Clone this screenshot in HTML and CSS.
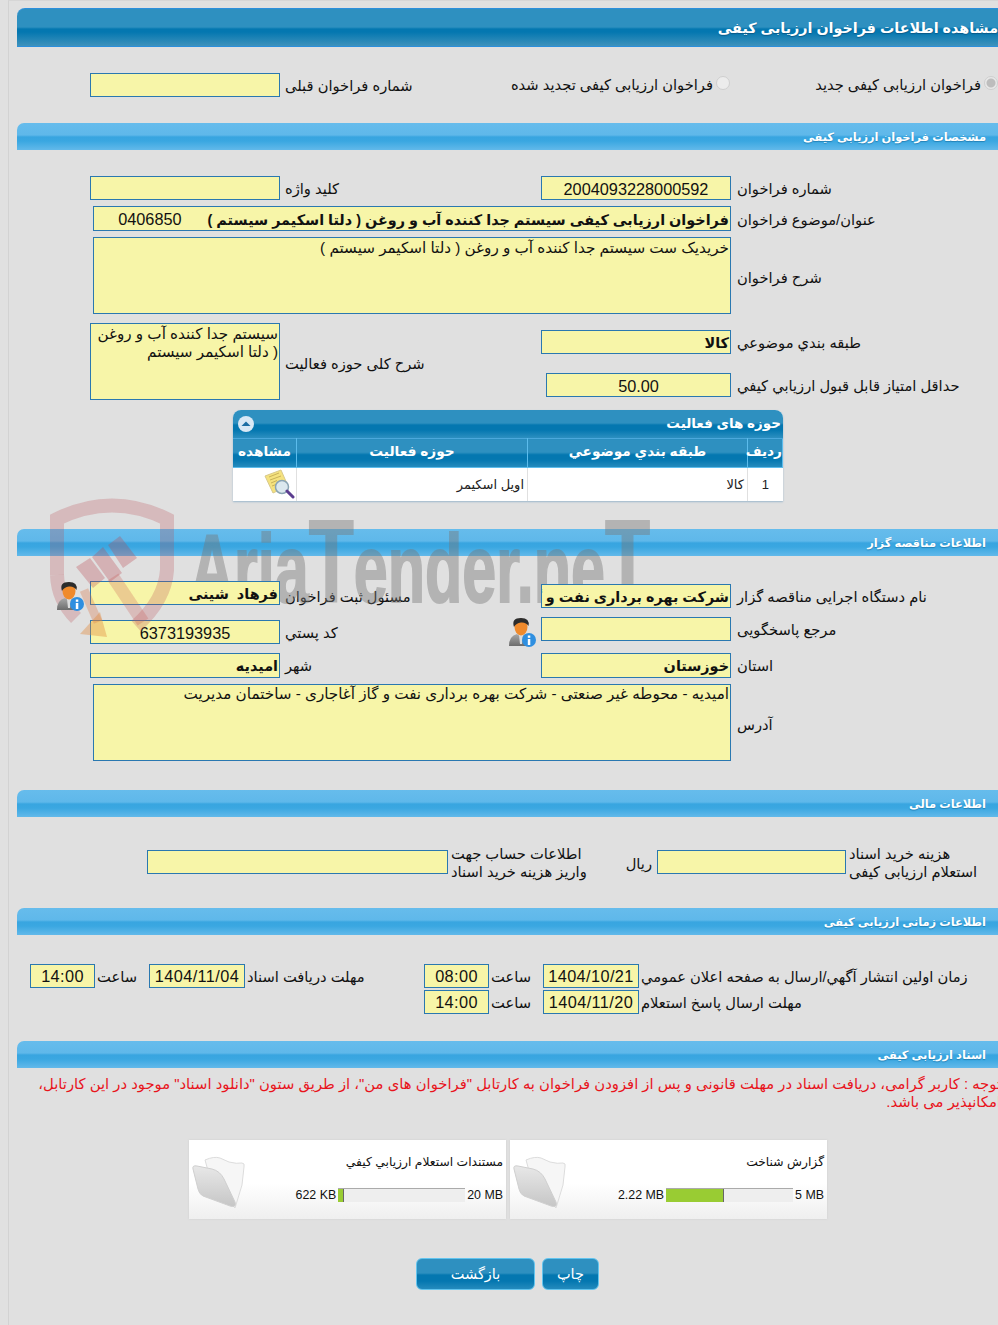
FILE: index.html
```html
<!DOCTYPE html>
<html lang="fa" dir="rtl">
<head>
<meta charset="utf-8">
<title>مشاهده اطلاعات فراخوان ارزیابی کیفی</title>
<link rel="stylesheet" href="styles.css">
</head>
<body>
<div class="page">
  <h1 class="bar bar-main">مشاهده اطلاعات فراخوان ارزیابی کیفی</h1>

  <div class="row radios">
    <div class="radio-cell rc1"><span class="radio checked"></span><span>فراخوان ارزیابی کیفی جدید</span></div>
    <div class="radio-cell rc2"><span class="radio"></span><span>فراخوان ارزیابی کیفی تجدید شده</span></div>
    <div class="lbl lbl-l prev-l">شماره فراخوان قبلی</div>
    <div class="field w190"></div>
  </div>

  <h2 class="bar bar-sub s2">مشخصات فراخوان ارزیابی کیفی</h2>

  <div class="row r1">
    <div class="lbl lbl-r">شماره فراخوان</div>
    <div class="field w190 center num">2004093228000592</div>
    <div class="lbl lbl-l">کلید واژه</div>
    <div class="field w190"></div>
  </div>
  <div class="row r2">
    <div class="lbl lbl-r">عنوان/موضوع فراخوان</div>
    <div class="field w638 bold">فراخوان ارزیابی کیفی سیستم جدا کننده آب و روغن ( دلتا اسکیمر سیستم )<span class="num plain">0406850</span></div>
  </div>
  <div class="row r3">
    <div class="lbl lbl-r">شرح فراخوان</div>
    <div class="field w638 area">خریدیک ست سیستم جدا کننده آب و روغن ( دلتا اسکیمر سیستم )</div>
  </div>
  <div class="row r4">
    <div class="stack">
      <div class="row r4a">
        <div class="lbl lbl-r">طبقه بندي موضوعي</div>
        <div class="field w190 bold">کالا</div>
      </div>
      <div class="row r4b">
        <div class="lbl lbl-r">حداقل امتياز قابل قبول ارزيابي كيفي</div>
        <div class="field w185 center num">50.00</div>
      </div>
    </div>
    <div class="lbl lbl-l">شرح کلی حوزه فعالیت</div>
    <div class="field w190 area">سیستم جدا کننده آب و روغن ( دلتا اسکیمر سیستم</div>
  </div>

  <div class="panel">
    <div class="panel-cap">
      <span>حوزه های فعالیت</span>
      <svg class="collapse" viewBox="0 0 16 16"><circle cx="8" cy="8" r="8" fill="#d9e8f5"/><path d="M3.500 10 8 5.500 12.500 10z" fill="#1c6ea4"/></svg>
    </div>
    <table class="grid">
      <thead>
        <tr><th class="c1">ردیف</th><th class="c2">طبقه بندي موضوعي</th><th class="c3">حوزه فعالیت</th><th class="c4">مشاهده</th></tr>
      </thead>
      <tbody>
        <tr>
          <td class="c1 tc">1</td>
          <td class="c2">کالا</td>
          <td class="c3">اویل اسکیمر</td>
          <td class="c4">
            <svg class="doc" viewBox="0 0 32 30">
              <path d="M1 7 17 1l7 16-15 7z" fill="#f5e27e" stroke="#d8c98c"/>
              <path d="M5 8l10-4M6 11l11-4M7 14l6-2.500M8 17l4-1.500" stroke="#c9b25a" fill="none"/>
              <circle cx="18" cy="18" r="6.500" fill="#dbe8ee" stroke="#8aa4b4" stroke-width="1.500"/>
              <path d="m23 22 6 6" stroke="#5b3d8f" stroke-width="3" stroke-linecap="round"/>
            </svg>
          </td>
        </tr>
      </tbody>
    </table>
  </div>

  <h2 class="bar bar-sub s3">اطلاعات مناقصه گزار</h2>

  <div class="row r5">
    <div class="lbl lbl-r">نام دستگاه اجرایی مناقصه گزار</div>
    <div class="field w190 bold end">شرکت بهره برداری نفت و گاز آغاجاری</div>
    <div class="lbl lbl-l">مسئول ثبت فراخوان</div>
    <div class="field w190 bold start">فرهاد&nbsp; شینی</div>
    <svg class="user" viewBox="0 0 28 30"><use href="#user-icon"/></svg>
  </div>
  <div class="row r6">
    <div class="lbl lbl-r">مرجع پاسخگویی</div>
    <div class="field w190 start"></div>
    <svg class="user user-r" viewBox="0 0 28 30"><use href="#user-icon"/></svg>
    <div class="lbl lbl-l lbl-short">کد پستي</div>
    <div class="field w190 center num end">6373193935</div>
  </div>
  <div class="row r7">
    <div class="lbl lbl-r">استان</div>
    <div class="field w190 bold">خوزستان</div>
    <div class="lbl lbl-l">شهر</div>
    <div class="field w190 bold">امیدیه</div>
  </div>
  <div class="row r8">
    <div class="lbl lbl-r">آدرس</div>
    <div class="field w638 area">امیدیه - محوطه غیر صنعتی - شرکت بهره برداری نفت و گاز آغاجاری - ساختمان مدیریت</div>
  </div>

  <h2 class="bar bar-sub s4">اطلاعات مالی</h2>

  <div class="row money">
    <div class="lbl two w152">هزینه خرید اسناد<br>استعلام ارزیابی کیفی</div>
    <div class="field w189"></div>
    <div class="lbl rial">ریال</div>
    <div class="lbl two w139">اطلاعات حساب جهت<br>واریز هزینه خرید اسناد</div>
    <div class="field w301"></div>
  </div>

  <h2 class="bar bar-sub s5">اطلاعات زمانی ارزیابی کیفی</h2>

  <div class="row t1">
    <div class="lbl t-lbl">زمان اولین انتشار آگهي/ارسال به صفحه اعلان عمومي</div>
    <div class="field d96 center num date">1404/10/21</div>
    <div class="lbl t-hr">ساعت</div>
    <div class="field d65 center num date">08:00</div>
    <div class="lbl t-lbl2">مهلت دریافت اسناد</div>
    <div class="field d96 center num date">1404/11/04</div>
    <div class="lbl t-hr">ساعت</div>
    <div class="field d65 center num date">14:00</div>
  </div>
  <div class="row t2">
    <div class="lbl t-lbl">مهلت ارسال پاسخ استعلام</div>
    <div class="field d96 center num date">1404/11/20</div>
    <div class="lbl t-hr">ساعت</div>
    <div class="field d65 center num date">14:00</div>
  </div>

  <h2 class="bar bar-sub s6">اسناد ارزیابی کیفی</h2>

  <p class="notice">توجه : کاربر گرامی، دریافت اسناد در مهلت قانونی و پس از افزودن فراخوان به کارتابل "فراخوان های من"، از طریق ستون "دانلود اسناد" موجود در این کارتابل،<br>امکانپذیر می باشد.</p>

  <div class="cards">
    <div class="card">
      <div class="card-body">
        <div class="card-title">گزارش شناخت</div>
        <div class="progress">
          <span class="size max" dir="ltr">5 MB</span>
          <span class="track"><span class="fill" style="width:58px"></span></span>
          <span class="size" dir="ltr">2.22 MB</span>
        </div>
      </div>
      <svg class="folder" viewBox="0 0 54 54"><use href="#folder-icon"/></svg>
    </div>
    <div class="card">
      <div class="card-body">
        <div class="card-title">مستندات استعلام ارزیابي کیفي</div>
        <div class="progress">
          <span class="size max" dir="ltr">20 MB</span>
          <span class="track"><span class="fill" style="width:6px"></span></span>
          <span class="size" dir="ltr">622 KB</span>
        </div>
      </div>
      <svg class="folder" viewBox="0 0 54 54"><use href="#folder-icon"/></svg>
    </div>
  </div>

  <div class="buttons">
    <button class="btn b-print" type="button">چاپ</button>
    <button class="btn b-back" type="button">بازگشت</button>
  </div>
</div>

<svg class="watermark wm-word" viewBox="40 495 620 150" aria-hidden="true">
  <text x="190" y="602" class="wm-text" textLength="460" lengthAdjust="spacingAndGlyphs">Aria<tspan class="wm-cap">T</tspan>ender.ne<tspan class="wm-cap">T</tspan></text>
</svg>
<svg class="watermark wm-logo" viewBox="40 495 620 150" aria-hidden="true">
  <path d="M57 575V519Q112 492 167 519V570Q165 600 136 626" class="wm-shield"/>
  <path d="M57 575Q58 600 76 618" class="wm-shield"/>
  <path d="M108 545 120 536 137 558 123 568zM92 557 103 547 122 573 110 582zM76 567 90 558 105 578 93 588z" class="wm-fill"/>
  <path d="M113 577 143 622" class="wm-handle"/>
  <path d="M84 590 98 622" class="wm-arrow"/>
  <path d="M80 634 100 612 107 637z" class="wm-head"/>
</svg>

<svg class="defs" aria-hidden="true">
  <defs>
    <linearGradient id="fg" x1="0" y1="0" x2="0" y2="1"><stop offset="0" stop-color="#e8e8e8"/><stop offset="1" stop-color="#c6c6c6"/></linearGradient>
    <linearGradient id="ub" x1="0" y1="0" x2="0" y2="1"><stop offset="0" stop-color="#a8a8a8"/><stop offset="1" stop-color="#6c6c6c"/></linearGradient>
    <symbol id="user-icon" viewBox="0 0 28 30">
      <path d="M1 29Q1 19 9 17L13 20 17 17Q24 19 24 29z" fill="url(#ub)"/>
      <path d="M11 18h4l-1 9h-2z" fill="#dcdcdc"/>
      <ellipse cx="13" cy="10" rx="6.500" ry="8.500" fill="#f08a2c"/>
      <path d="M6 10Q3 1 13 1q9 0 7.500 8-2.500-4-7.500-3.500Q8 6 6 10z" fill="#2c2c2c"/>
      <circle cx="21" cy="23" r="7" fill="#2f8fe0"/>
      <rect x="19.800" y="22" width="2.500" height="6" fill="#fff"/>
      <rect x="19.800" y="18.500" width="2.500" height="2.300" fill="#fff"/>
    </symbol>
    <symbol id="folder-icon" viewBox="0 0 54 54">
      <path d="M13 5Q22 1 28 3L37 7Q45 9 50 8 53 8 52 12L50 30 43 53 20 30z" fill="#f6f6f6" stroke="#dcdcdc"/>
      <path d="M1 14Q0 10 5 11L20 14Q28 16 32 24L43 47Q45 53 38 51L11 41Q7 39 6 34z" fill="url(#fg)" stroke="#cfcfcf"/>
    </symbol>
  </defs>
</svg>
</body>
</html>
```

FILE: styles.css
```css
* { box-sizing: border-box; }
html, body { margin: 0; padding: 0; }
html { overflow: hidden; }
body {
  position: relative;
  width: 998px;
  height: 1325px;
  overflow: hidden;
  background: #e0e0e0;
  color: #111;
  font: 14px/18px "Liberation Sans", "DejaVu Sans", sans-serif;
}
.page {
  margin-left: 8px;
  height: 1325px;
  padding: 7px 0 0 8px;
  border-left: 1px solid #d2d2d2;
  border-top: 1px solid #d6d6d6;
}

/* section bars */
.bar { margin: 0; color: #fff; font-weight: bold; white-space: nowrap; overflow: hidden; }
.bar-main {
  height: 39px;
  padding: 9px 0 0;
  font-size: 14.300px;
  line-height: 20px;
  border-radius: 8px 0 0 0;
  border: solid #2b8fdc;
  border-width: 1px 0;
  background: linear-gradient(#2e90c0 0, #2e90c0 18px, #0477b0 20px, #0477b0 23px, #3e92bc 37px);
  text-shadow: 0 1px 1px #0b5a88;
}
.bar-sub {
  height: 27px;
  padding: 6px 12px 0 0;
  font-size: 11.400px;
  line-height: 17px;
  border-radius: 7px 0 0 0;
  background: linear-gradient(#66bcec 0, #5fb8ea 12px, #38a5e0 14px, #3aa7e1 18px, #62b9ea 27px);
  text-shadow: 0 1px 1px #2480b5;
}
.s2 { margin-top: 26px; }
.s3 { margin-top: 28px; }
.s4 { margin-top: 29px; }
.s5 { margin-top: 34px; }
.s6 { margin-top: 27px; }

/* rows */
.row { display: flex; direction: rtl; align-items: stretch; }
.lbl {
  display: flex;
  align-items: center;
  justify-content: flex-end;
  flex: none;
  padding-top: 2px;
  font-size: 14.700px;
  white-space: nowrap;
}
.lbl-r { width: 267px; padding-left: 6px; }
.lbl-l { width: 261px; padding-left: 5px; }
.field {
  position: relative;
  z-index: 2;
  flex: none;
  height: 24px;
  padding: 0 1px;
  background: #f7f5a8;
  border: 1px solid #2a78b0;
  font-size: 15.200px;
  line-height: 24px;
  text-align: right;
  white-space: nowrap;
  overflow: hidden;
}
.w190 { width: 190px; }
.w185 { width: 185px; }
.w638 { width: 638px; }
.w189 { width: 189px; }
.w301 { width: 301px; }
.d96 { width: 96px; }
.d65 { width: 65px; }
.center { text-align: center; }
.num { font-size: 16.300px; font-family: "Liberation Sans", sans-serif; }
.date { letter-spacing: .4px; line-height: 22px; }
.bold { font-size: 14.400px; font-weight: bold; }
.plain { font-weight: normal; margin-right: 26px; }
.area { height: 77px; line-height: 18px; white-space: normal; }
.r3 .area, .r4 .area { padding-top: 1px; }
.start { align-self: flex-start; }
.end { align-self: flex-end; }

.radios { height: 24px; margin-top: 26px; }
.radio-cell { display: flex; align-items: center; flex: none; font-size: 14.700px; gap: 3px; white-space: nowrap; }
.rc1 { width: 268px; }
.rc2 { width: 225px; }
.lbl.prev-l { width: 225px; }
.radio {
  width: 14px;
  height: 14px;
  margin-top: -4px;
  border-radius: 50%;
  flex: none;
  border: 1px solid #cfcfcf;
  background: #ececec;
}
.checked { background: radial-gradient(circle, #bdbdbd 0 4px, #e8e8e8 5px); }

.r1 { margin-top: 26px; height: 24px; }
.r2 { margin-top: 6px; height: 25px; }
.r2 .field { height: 25px; }
.r3 { margin-top: 6px; height: 77px; }
.r3 .lbl { padding-top: 4px; }
.r4 { margin-top: 9px; height: 77px; }
.r4 > .lbl { padding-top: 4px; }
.stack { width: 457px; flex: none; }
.r4a { margin-top: 7px; height: 24px; }
.r4b { margin-top: 19px; height: 24px; }

/* activity table */
.panel {
  width: 550px;
  margin: 10px 215px 0 0;
  border-radius: 8px 8px 0 0;
  box-shadow: 0 1px 2px #9db8cc;
  background: #fff;
  overflow: hidden;
}
.panel-cap {
  display: flex;
  justify-content: space-between;
  align-items: center;
  height: 28px;
  padding: 0 2px 0 5px;
  color: #fff;
  font-weight: bold;
  font-size: 13.500px;
  background: linear-gradient(#2e90c0 0, #2e90c0 13px, #0477b0 15px, #0477b0 20px, #2c8fc0 28px);
}
.collapse { width: 16px; height: 16px; }
.grid { width: 100%; border-collapse: collapse; table-layout: fixed; }
.grid th {
  height: 29px;
  padding: 0 0 3px;
  color: #fff;
  font-size: 13.700px;
  border: 1px solid #5cbcec;
  border-top-color: #4aa8dc;
  background: linear-gradient(#2e90c0 0, #2e90c0 13px, #0477b0 15px, #0477b0 20px, #2c8fc0 29px);
}
.grid td {
  height: 33px;
  padding: 1px 3px 0;
  border-left: 1px solid #e0e0e0;
  font-size: 13px;
  color: #222;
  text-align: right;
}
.c1 { width: 35px; }
.c2 { width: 220px; }
.c3 { width: 231px; }
.c4 { width: 64px; }
.grid .tc { text-align: center; }
.grid td.c4 { border-left: 0; padding: 0; }
.doc { display: block; width: 32px; height: 30px; margin-left: 30px; }

/* contractor */
.r5 { margin-top: 25px; height: 27px; }
.r5 .lbl { align-self: flex-end; height: 24px; }
.user { width: 28px; height: 30px; flex: none; position: relative; z-index: 4; }
.r5 .user { margin-right: 6px; align-self: flex-start; }
.r6 { margin-top: 9px; height: 27px; }
.r6 .lbl { height: 24px; align-self: flex-end; }
.r6 .lbl-r { align-self: flex-start; }
.r6 .user-r { margin-right: 5px; align-self: flex-start; }
.lbl.lbl-short { width: 228px; }
.r7 { margin-top: 9px; height: 25px; }
.r7 .field { height: 25px; }
.r8 { margin-top: 6px; height: 77px; }
.r8 .lbl { padding-top: 6px; }

/* money */
.money { margin-top: 33px; height: 24px; }
.lbl.two { display: block; padding-top: 0; line-height: 18px; text-align: left; }
.w152 { width: 152px; padding-left: 3px; margin-top: -5px; }
.lbl.rial { width: 69px; justify-content: flex-start; padding: 4px 5px 0 0; }
.w139 { width: 140px; padding-left: 3px; margin-top: -5px; }

/* timing */
.t1 { margin-top: 29px; height: 24px; }
.t2 { margin-top: 2px; height: 24px; }
.t-lbl { width: 359px; padding-left: 2px; }
.t-hr { width: 54px; padding-left: 2px; }
.t-lbl2 { width: 179px; padding-left: 2px; }

/* notice */
.notice {
  margin: 7px -3px 0 0;
  color: #e8141c;
  font-size: 14.800px;
  line-height: 18px;
  white-space: nowrap;
  direction: rtl;
}

/* document cards */
.cards { display: flex; direction: rtl; gap: 4px; margin: 29px 171px 0 0; }
.card {
  display: flex;
  width: 317px;
  height: 79px;
  padding: 15px 3px 0 3px;
  background: linear-gradient(#fff 0, #fff 55%, #efefef 100%);
  box-shadow: 0 0 2px #ccc;
}
.card-body { flex: 1; }
.card-title { font-size: 12.300px; line-height: 14px; color: #111; }
.progress { display: flex; align-items: center; gap: 2px; margin: 19px 0 0 0; font-size: 12.400px; line-height: 14px; }
.track { display: block; width: 127px; height: 14px; background: #eee; border-top: 1px solid #aaa; direction: ltr; }
.fill { display: block; height: 13px; background: #99cc33; border-right: 1px solid #666; }
.folder { width: 54px; height: 54px; flex: none; filter: blur(.4px); }

/* buttons */
.buttons { display: flex; direction: rtl; gap: 7px; margin: 39px 399px 0 0; }
.btn {
  height: 32px;
  padding: 0;
  color: #fff;
  font: 14.500px "Liberation Sans", "DejaVu Sans", sans-serif;
  border: 1px solid #62c4ee;
  border-radius: 6px;
  background: linear-gradient(#2e90c0 0, #2e90c0 14px, #0477b0 16px, #0477b0 22px, #2c8fc0 32px);
}
.b-print { width: 57px; }
.b-back { width: 119px; }

/* watermark */
.watermark {
  position: absolute;
  left: 40px;
  top: 495px;
  width: 620px;
  height: 150px;
  pointer-events: none;
}
.wm-word { z-index: 1; }
.wm-logo { z-index: 3; }
.wm-shield { fill: none; stroke: #b8474f; stroke-width: 14; opacity: .25; }
.wm-fill { fill: #b8474f; opacity: .3; }
.wm-handle { stroke: #c8554e; stroke-width: 13; opacity: .25; }
.wm-arrow { stroke: #d8703e; stroke-width: 9; opacity: .3; }
.wm-head { fill: #e08a3c; opacity: .4; }
.wm-text {
  direction: ltr;
  unicode-bidi: isolate;
  font: bold 96px "Liberation Sans Narrow", "Liberation Sans", sans-serif;
  fill: #777;
  stroke: #777;
  stroke-width: 2;
  opacity: .42;
}
.wm-cap { font-size: 116px; }
.defs { position: absolute; width: 0; height: 0; }
```
